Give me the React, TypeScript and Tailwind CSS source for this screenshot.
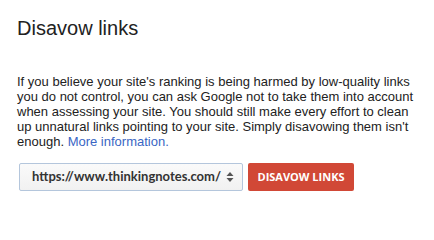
import React from "react";

export default function App() {
  return (
    <div className="w-[434px] h-[219px] bg-white overflow-hidden" style={{ fontFamily: '"Liberation Sans", Arial, sans-serif' }}>
      <div className="pl-[17px] pt-[16px]">
        <h1 className="text-[20px] leading-[24px] text-[#222222] font-normal">Disavow links</h1>
        <p className="mt-[34px] w-[400px] text-[13px] leading-[15px] text-[#222222]">
          If you believe your site's ranking is being harmed by low-quality links you do not control, you can ask Google not to take them into account when assessing your site. You should still make every effort to clean up unnatural links pointing to your site. Simply disavowing them isn't enough.{" "}
          <a className="text-[#3a66c4]">More information.</a>
        </p>
        <div className="mt-[14px] ml-[2px] flex items-center gap-[5px]">
          <div className="w-[224px] shrink-0 h-[28px] border border-[#b4c6dc] rounded-[2px] bg-gradient-to-b from-[#fafafa] to-[#f1f1f1] flex items-center justify-between pl-[12px] pr-[8px] overflow-hidden">
            <span className="text-[13px] font-bold text-[#333333] whitespace-nowrap" style={{ fontFamily: 'Lato, sans-serif' }}>https://www.thinkingnotes.com/</span>
            <svg width="8" height="12" viewBox="0 0 8 12" className="shrink-0">
              <path d="M4 1 L7.5 5 L0.5 5 Z" fill="#555" />
              <path d="M4 11 L7.5 7 L0.5 7 Z" fill="#555" />
            </svg>
          </div>
          <button className="h-[28px] w-[106px] shrink-0 rounded-[2px] bg-[#d14836] text-white text-[11px] font-bold flex items-center justify-center" style={{ fontFamily: '"Open Sans", sans-serif' }}>
            DISAVOW LINKS
          </button>
        </div>
      </div>
    </div>
  );
}
